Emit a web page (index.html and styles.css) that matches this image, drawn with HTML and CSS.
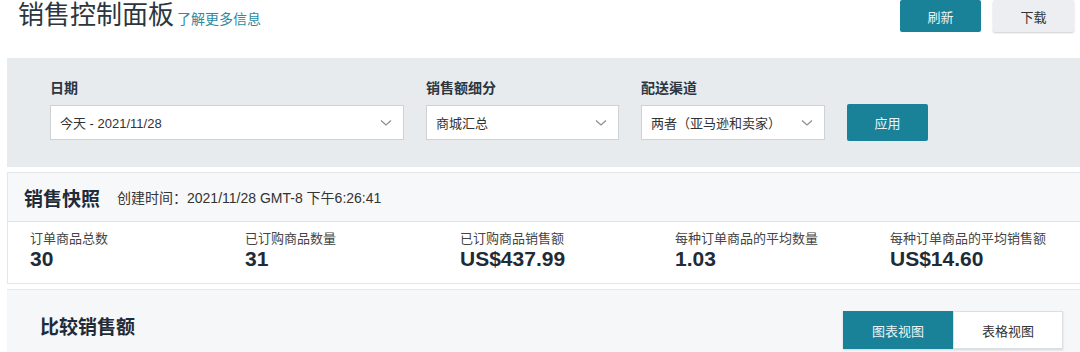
FILE: index.html
```html
<!DOCTYPE html>
<html lang="zh-CN">
<head>
  <meta charset="UTF-8" />
  <title>销售控制面板</title>
  <link rel="stylesheet" href="styles.css">
</head>
<body>
  <div class="topbar">
    <div class="title-wrap">
      <h1>销售控制面板</h1>
      <a class="more" href="#">了解更多信息</a>
    </div>
    <div class="top-actions">
      <button class="btn btn-primary">刷新</button>
      <button class="btn btn-light">下载</button>
    </div>
  </div>

  <div class="filters">
    <div class="field">
      <label>日期</label>
      <div class="select w-date">
        <span>今天 - 2021/11/28</span>
        <svg class="chev" width="12" height="8" viewBox="0 0 12 8"><polyline points="1,1.5 6,6 11,1.5" fill="none" stroke="#8a9096" stroke-width="1.3"/></svg>
      </div>
    </div>
    <div class="field">
      <label>销售额细分</label>
      <div class="select w-mall">
        <span>商城汇总</span>
        <svg class="chev" width="12" height="8" viewBox="0 0 12 8"><polyline points="1,1.5 6,6 11,1.5" fill="none" stroke="#8a9096" stroke-width="1.3"/></svg>
      </div>
    </div>
    <div class="field">
      <label>配送渠道</label>
      <div class="select w-chan">
        <span>两者（亚马逊和卖家）</span>
        <svg class="chev" width="12" height="8" viewBox="0 0 12 8"><polyline points="1,1.5 6,6 11,1.5" fill="none" stroke="#8a9096" stroke-width="1.3"/></svg>
      </div>
    </div>
    <button class="btn btn-primary btn-apply">应用</button>
  </div>

  <div class="snapshot">
    <div class="snap-head">
      <h2>销售快照</h2>
      <span class="created">创建时间：2021/11/28 GMT-8 下午6:26:41</span>
    </div>
    <div class="metrics">
      <div class="metric"><div class="m-label">订单商品总数</div><div class="m-value">30</div></div>
      <div class="metric"><div class="m-label">已订购商品数量</div><div class="m-value">31</div></div>
      <div class="metric"><div class="m-label">已订购商品销售额</div><div class="m-value">US$437.99</div></div>
      <div class="metric"><div class="m-label">每种订单商品的平均数量</div><div class="m-value">1.03</div></div>
      <div class="metric"><div class="m-label">每种订单商品的平均销售额</div><div class="m-value">US$14.60</div></div>
    </div>
  </div>

  <div class="compare">
    <h2>比较销售额</h2>
    <div class="toggle">
      <button class="tg active">图表视图</button>
      <button class="tg">表格视图</button>
    </div>
  </div>
</body>
</html>
```

FILE: styles.css
```css
body {
  margin: 0;
  background: #fff;
  font-family: "Liberation Sans", "Noto Sans CJK SC", sans-serif;
  color: #232f3e;
  overflow: hidden;
}
.topbar {
  display: flex;
  justify-content: space-between;
  height: 58px;
  padding: 0 6px 0 18px;
}
.title-wrap {
  display: flex;
  align-items: baseline;
  margin-top: -4px;
}
h1 {
  margin: 0;
  font-size: 26px;
  font-weight: 400;
  line-height: 38px;
  color: #2b3640;
}
.more {
  margin-left: 3px;
  font-size: 14px;
  color: #2a8ba3;
  text-decoration: none;
}
.top-actions {
  display: flex;
  gap: 12px;
  align-items: flex-start;
}
.btn {
  font-family: inherit;
  font-size: 13px;
  border: none;
  border-radius: 2px;
  cursor: pointer;
}
.top-actions .btn {
  width: 81px;
  height: 32px;
}
.btn-primary {
  background: #1a8298;
  color: #e8f4f7;
}
.btn-light {
  background: #eceef1;
  color: #333;
  box-shadow: 0 1px 2px rgba(0,0,0,0.2);
}
.filters {
  margin-left: 7px;
  height: 109px;
  background: #e8ebee;
  display: flex;
  align-items: flex-end;
  padding: 0 0 27px 43px;
  box-sizing: border-box;
  gap: 22px;
}
.field label {
  display: block;
  font-size: 14px;
  font-weight: 700;
  color: #2b3640;
  margin-bottom: 8px;
}
.select {
  height: 35px;
  box-sizing: border-box;
  background: #fff;
  border: 1px solid #cdd2d7;
  display: flex;
  align-items: center;
  justify-content: space-between;
  padding: 0 11px 0 9px;
  font-size: 13px;
  color: #333;
}
.w-date { width: 354px; }
.w-mall { width: 193px; }
.w-chan { width: 184px; }
.btn-apply {
  width: 81px;
  height: 37px;
  margin-bottom: -1px;
}
.snapshot {
  margin: 5px 0 0 7px;
  border: 1px solid #e4e7ea;
  border-right: none;
}
.snap-head {
  height: 48px;
  background: #f7f8fa;
  border-bottom: 1px solid #e1e4e7;
  display: flex;
  align-items: center;
  padding-left: 16px;
}
h2 {
  margin: 0;
  font-size: 19px;
  font-weight: 700;
  color: #1f2b36;
}
.created {
  margin-left: 17px;
  font-size: 14px;
  color: #333;
}
.metrics {
  display: grid;
  grid-template-columns: repeat(5, 215px);
  padding: 8px 0 14px 22px;
}
.m-label {
  font-size: 13px;
  color: #444;
  line-height: 18px;
}
.m-value {
  font-size: 21px;
  font-weight: 700;
  color: #1f2b36;
  line-height: 21px;
}
.compare {
  margin: 5px 0 0 7px;
  height: 70px;
  background: #f5f7f9;
  border-top: 1px solid #e6e8ea;
  display: flex;
  justify-content: space-between;
  align-items: flex-start;
  padding: 21px 17px 0 33px;
}
.compare h2 {
  margin-top: 1px;
}
.toggle {
  display: flex;
  box-shadow: 0 1px 2px rgba(0,0,0,0.15);
}
.tg {
  width: 110px;
  height: 38px;
  font-family: inherit;
  font-size: 13px;
  border: 1px solid #dde0e3;
  background: #fff;
  color: #333;
}
.tg.active {
  background: #1a8298;
  border-color: #1a8298;
  color: #e8f4f7;
}
```
